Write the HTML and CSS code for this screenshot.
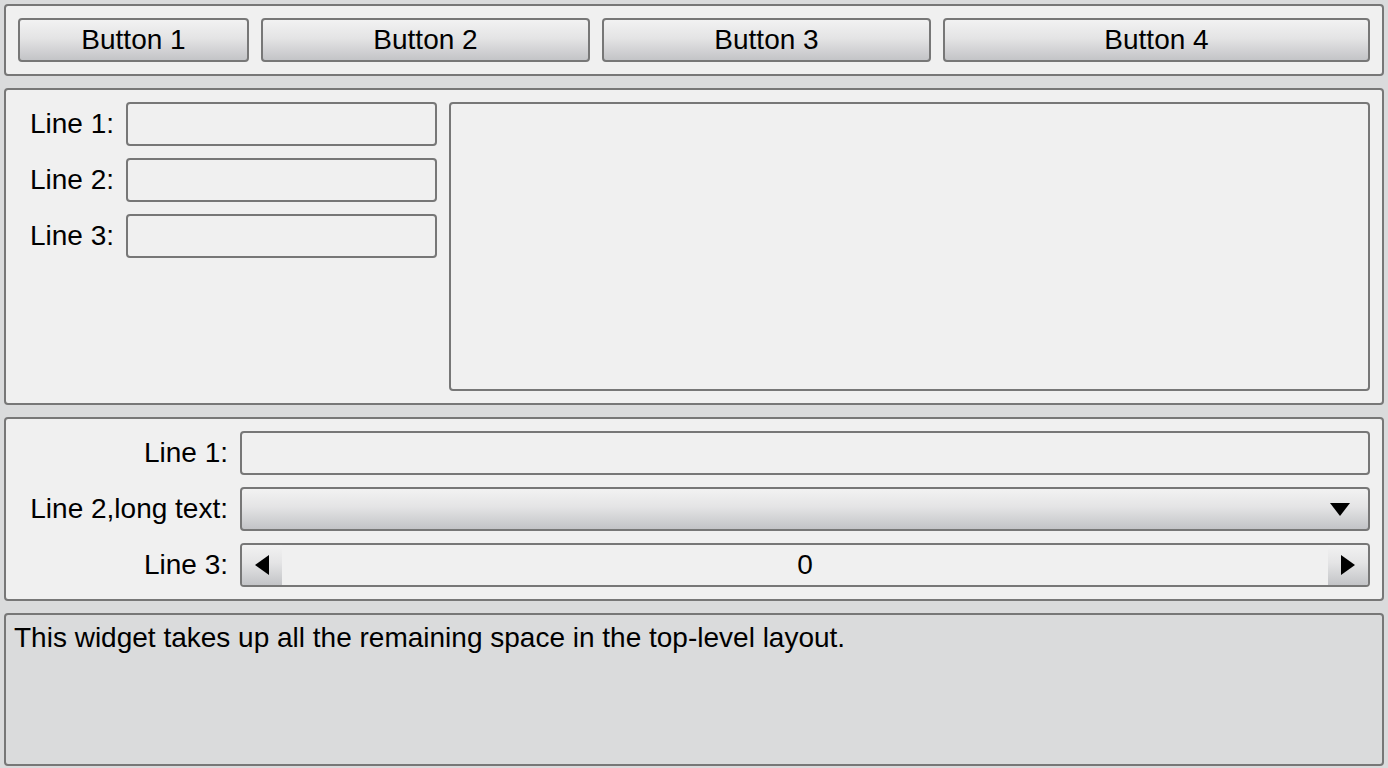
FILE: index.html
```html
<!DOCTYPE html>
<html>
<head>
<meta charset="utf-8">
<link rel="stylesheet" href="styles.css">
</head>
<body>
<div class="page">
  <div class="group buttons">
    <button class="btn">Button 1</button>
    <button class="btn">Button 2</button>
    <button class="btn">Button 3</button>
    <button class="btn">Button 4</button>
  </div>

  <div class="group grid-group">
    <div class="form small">
      <label class="lbl">Line 1:</label><div class="edit"></div>
      <label class="lbl">Line 2:</label><div class="edit"></div>
      <label class="lbl">Line 3:</label><div class="edit"></div>
    </div>
    <div class="textedit"></div>
  </div>

  <div class="group form wide">
    <label class="lbl">Line 1:</label><div class="edit"></div>
    <label class="lbl">Line 2,long text:</label>
    <div class="combo">
      <svg class="arrow-down" width="20" height="13" viewBox="0 0 20 13"><path d="M0 0H20L10 13Z" fill="#000"/></svg>
    </div>
    <label class="lbl">Line 3:</label>
    <div class="spin">
      <div class="spin-btn"><svg width="14" height="20" viewBox="0 0 14 20"><path d="M14 0V20L0 10Z" fill="#000"/></svg></div>
      <div class="spin-val">0</div>
      <div class="spin-btn"><svg width="14" height="20" viewBox="0 0 14 20"><path d="M0 0V20L14 10Z" fill="#000"/></svg></div>
    </div>
  </div>

  <div class="remain">This widget takes up all the remaining space in the top-level layout.</div>
</div>
</body>
</html>
```

FILE: styles.css
```css
* { box-sizing: border-box; }
html, body {
  margin: 0;
  height: 100%;
  background: #dadbdc;
  font-family: "Liberation Sans", Arial, sans-serif;
  font-size: 28px;
  color: #000;
}
.page {
  height: 768px;
  padding: 4px 4px 2px 4px;
  display: flex;
  flex-direction: column;
  gap: 12px;
}
.group {
  border: 2px solid #777;
  border-radius: 4px;
  background: #f0f0f0;
  padding: 12px;
}
.buttons {
  display: grid;
  grid-template-columns: 231fr 329fr 329fr 427fr;
  column-gap: 12px;
}
.btn {
  height: 44px;
  border: 2px solid #777;
  border-radius: 4px;
  background: linear-gradient(#f2f2f2, #e4e4e5 45%, #c3c4c7);
  font-family: inherit;
  font-size: 28px;
  color: #000;
  padding: 0;
  margin: 0;
}
.grid-group {
  display: grid;
  grid-template-columns: 419px 1fr;
  column-gap: 12px;
  height: 317px;
  padding: 12px 12px 12px 12px;
}
.form {
  display: grid;
  column-gap: 12px;
  row-gap: 12px;
  align-content: start;
}
.form.small {
  grid-template-columns: 96px 1fr;
}
.form.wide {
  grid-template-columns: 210px 1fr;
  height: 184px;
}
.lbl {
  height: 44px;
  display: flex;
  align-items: center;
  justify-content: flex-end;
  white-space: nowrap;
}
.edit {
  height: 44px;
  border: 2px solid #777;
  border-radius: 4px;
  background: #f0f0f0;
}
.textedit {
  border: 2px solid #777;
  border-radius: 4px;
  background: #f0f0f0;
  height: 289px;
}
.combo {
  height: 44px;
  border: 2px solid #777;
  border-radius: 4px;
  background: linear-gradient(#f2f2f2, #e4e4e5 45%, #c3c4c7);
  display: flex;
  align-items: center;
  justify-content: flex-end;
  padding-right: 18px;
}
.spin {
  height: 44px;
  border: 2px solid #777;
  border-radius: 4px;
  background: #f0f0f0;
  display: flex;
  overflow: hidden;
}
.spin-btn {
  width: 40px;
  display: flex;
  align-items: center;
  justify-content: center;
  background: linear-gradient(#f2f2f2, #e4e4e5 45%, #c3c4c7);
}
.spin-val {
  flex: 1;
  display: flex;
  align-items: center;
  justify-content: center;
}
.remain {
  flex: 1;
  border: 2px solid #777;
  border-radius: 4px;
  background: #dadbdc;
  padding: 7px 8px;
  line-height: 32px;
}
```
